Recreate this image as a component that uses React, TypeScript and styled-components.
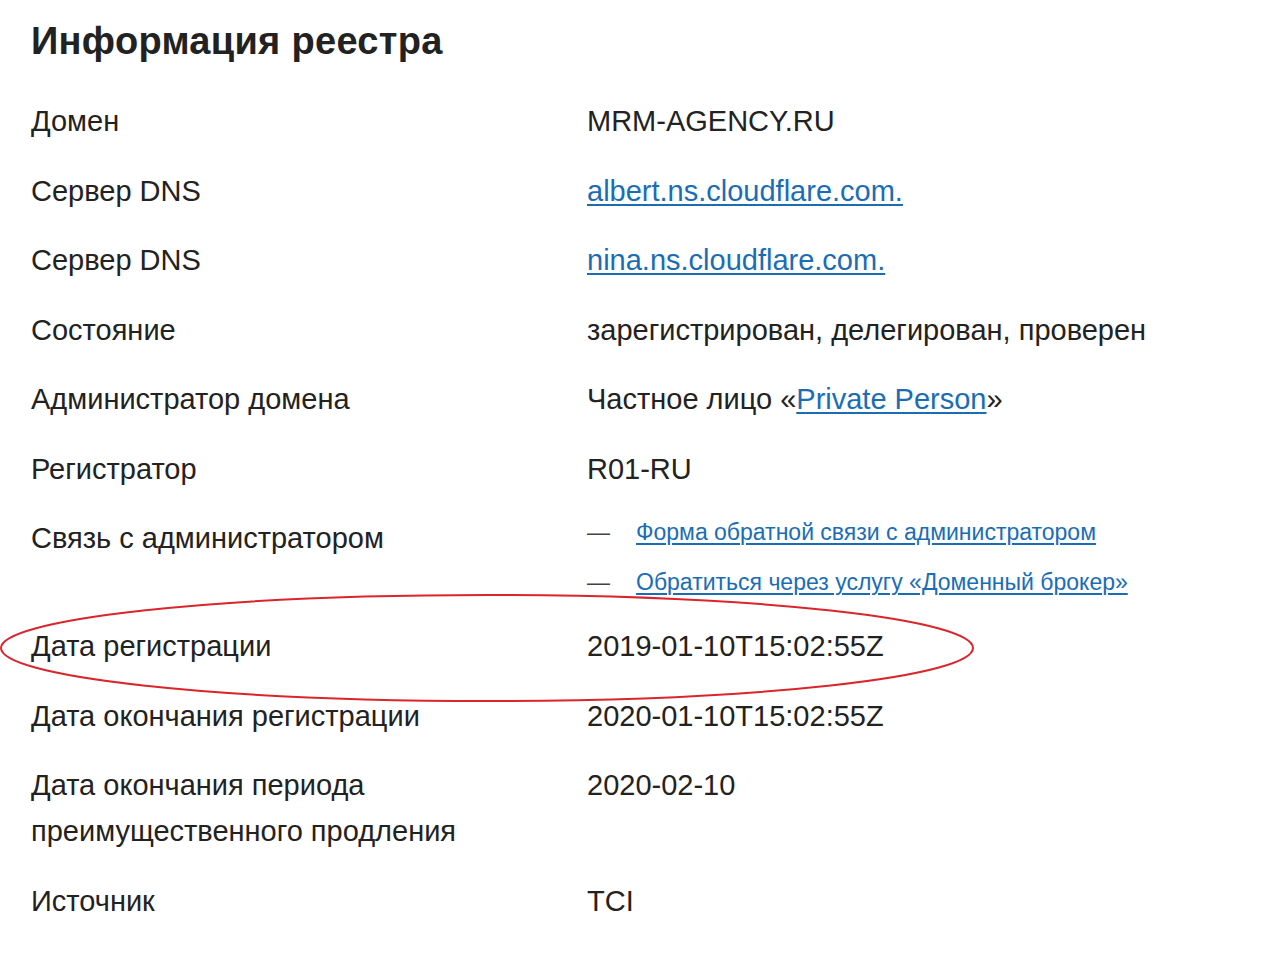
import * as React from 'react';
import styled, { createGlobalStyle } from 'styled-components';

const GlobalStyle = createGlobalStyle`
  html, body {
    margin: 0;
    padding: 0;
    background: #fff;
  }
  body {
    font-family: "Liberation Sans", Arial, sans-serif;
    color: #222;
  }
`;

const Page = styled.div`
  position: relative;
  width: 1280px;
  height: 955px;
  overflow: hidden;
  padding: 0 0 0 31px;
  box-sizing: border-box;
`;

const Title = styled.h1`
  margin: 0;
  padding-top: 18px;
  height: 86px;
  box-sizing: border-box;
  font-size: 38px;
  line-height: 46px;
  letter-spacing: 0.3px;
  font-weight: 700;
  color: #222;
`;

const InfoGrid = styled.dl`
  display: grid;
  grid-template-columns: 556px 1fr;
  margin: 0;
`;

const Label = styled.dt`
  margin: 0;
  padding: 12px 0 11.5px;
  font-size: 29px;
  line-height: 46px;
  color: #222;
`;

const Value = styled.dd<{ $flush?: boolean }>`
  margin: 0;
  padding: ${(p) => (p.$flush ? '0' : '12px 0 11.5px')};
  font-size: 29px;
  line-height: 46px;
  color: #222;
`;

const Link = styled.a`
  color: #1a6db5;
  text-decoration: underline;
  text-underline-offset: 3px;
  text-decoration-thickness: 2px;
`;

const ContactList = styled.ul`
  list-style: none;
  margin: 0;
  padding: 4px 0;
`;

const ContactItem = styled.li`
  display: flex;
  align-items: center;
  font-size: 23px;
  line-height: 50px;
`;

const Dash = styled.span`
  width: 49px;
  color: #444;
`;

const SmallLink = styled(Link)`
  text-decoration-thickness: 1.5px;
  text-underline-offset: 3px;
`;

const Highlight = styled.svg`
  position: absolute;
  left: 0;
  top: 0;
  pointer-events: none;
`;

type Row = { label: React.ReactNode; value: React.ReactNode };

const rows: Row[] = [
  { label: 'Домен', value: 'MRM-AGENCY.RU' },
  { label: 'Сервер DNS', value: <Link href="#">albert.ns.cloudflare.com.</Link> },
  { label: 'Сервер DNS', value: <Link href="#">nina.ns.cloudflare.com.</Link> },
  { label: 'Состояние', value: 'зарегистрирован, делегирован, проверен' },
  {
    label: 'Администратор домена',
    value: (
      <>
        Частное лицо «<Link href="#">Private Person</Link>»
      </>
    ),
  },
  { label: 'Регистратор', value: 'R01-RU' },
];

const tailRows: Row[] = [
  { label: 'Дата регистрации', value: '2019-01-10T15:02:55Z' },
  { label: 'Дата окончания регистрации', value: '2020-01-10T15:02:55Z' },
  {
    label: (
      <>
        Дата окончания периода
        <br />
        преимущественного продления
      </>
    ),
    value: '2020-02-10',
  },
  { label: 'Источник', value: 'TCI' },
];

const contacts = [
  'Форма обратной связи с администратором',
  'Обратиться через услугу «Доменный брокер»',
];

export default function App() {
  return (
    <Page>
      <GlobalStyle />
      <Title>Информация реестра</Title>
      <InfoGrid>
        {rows.map((r, i) => (
          <React.Fragment key={i}>
            <Label>{r.label}</Label>
            <Value>{r.value}</Value>
          </React.Fragment>
        ))}
        <Label>Связь с администратором</Label>
        <Value $flush>
          <ContactList>
            {contacts.map((c) => (
              <ContactItem key={c}>
                <Dash>—</Dash>
                <SmallLink href="#">{c}</SmallLink>
              </ContactItem>
            ))}
          </ContactList>
        </Value>
        {tailRows.map((r, i) => (
          <React.Fragment key={i}>
            <Label>{r.label}</Label>
            <Value>{r.value}</Value>
          </React.Fragment>
        ))}
      </InfoGrid>
      <Highlight width="1280" height="955" viewBox="0 0 1280 955">
        <ellipse cx="487" cy="648" rx="486" ry="53" fill="none" stroke="#d9252b" strokeWidth="2" />
      </Highlight>
    </Page>
  );
}
